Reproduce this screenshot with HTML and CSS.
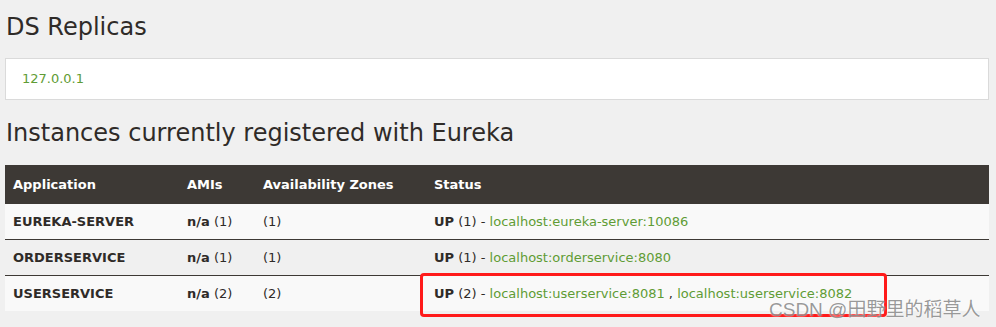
FILE: index.html
```html
<!DOCTYPE html>
<html lang="en">
<head>
  <meta charset="utf-8" />
  <title>Eureka</title>
  <link rel="stylesheet" href="styles.css">
</head>
<body>
  <h2 class="title">DS Replicas</h2>
  <ul class="replicas">
    <li><a href="#">127.0.0.1</a></li>
  </ul>

  <h2 class="title second">Instances currently registered with Eureka</h2>
  <table class="instances">
    <colgroup>
      <col class="c-app">
      <col class="c-ami">
      <col class="c-zone">
      <col>
    </colgroup>
    <thead>
      <tr>
        <th>Application</th>
        <th>AMIs</th>
        <th>Availability Zones</th>
        <th>Status</th>
      </tr>
    </thead>
    <tbody>
      <tr>
        <td><b>EUREKA-SERVER</b></td>
        <td><b>n/a</b> (1)</td>
        <td>(1)</td>
        <td><b>UP</b> (1) - <a href="#">localhost:eureka-server:10086</a></td>
      </tr>
      <tr>
        <td><b>ORDERSERVICE</b></td>
        <td><b>n/a</b> (1)</td>
        <td>(1)</td>
        <td><b>UP</b> (1) - <a href="#">localhost:orderservice:8080</a></td>
      </tr>
      <tr>
        <td><b>USERSERVICE</b></td>
        <td><b>n/a</b> (2)</td>
        <td>(2)</td>
        <td><b>UP</b> (2) - <a href="#">localhost:userservice:8081</a> , <a href="#">localhost:userservice:8082</a></td>
      </tr>
    </tbody>
  </table>

  <div class="highlight"></div>
  <div class="watermark">CSDN @田野里的稻草人</div>
</body>
</html>
```

FILE: styles.css
```css
body {
  margin: 0;
  padding: 0 7px 0 5px;
  background: #f0f0f0;
  color: #2f2b28;
  font-family: "DejaVu Sans", sans-serif;
  font-size: 13px;
  position: relative;
  height: 327px;
  overflow: hidden;
}
.title {
  margin: 0;
  padding: 12px 0 0 1px;
  font-size: 24px;
  font-weight: normal;
  line-height: 30px;
  color: #2f2b28;
}
.second {
  padding-top: 18px;
}
.replicas {
  list-style: none;
  margin: 16px 0 0;
  padding: 0 16px;
  background: #fff;
  border: 1px solid #dadada;
  height: 40px;
  line-height: 40px;
}
a {
  color: #5f9c35;
  text-decoration: none;
}
.instances {
  width: 100%;
  margin-top: 17px;
  border-collapse: collapse;
  table-layout: fixed;
}
.c-app { width: 174px; }
.c-ami { width: 76px; }
.c-zone { width: 171px; }
.instances th {
  background: #3d3935;
  color: #fff;
  text-align: left;
  font-weight: bold;
  height: 38px;
  padding: 0 8px;
}
.instances td {
  height: 35px;
  padding: 0 8px;
  border-top: 1px solid #3d3935;
  white-space: nowrap;
}
.instances tbody tr:nth-child(odd) {
  background: #f9f9f9;
}
.instances b {
  font-weight: 600;
}
.highlight {
  position: absolute;
  left: 420px;
  top: 273px;
  width: 461px;
  height: 38px;
  border: 3px solid #ff1a1a;
  border-radius: 4px;
}
.watermark {
  position: absolute;
  left: 769px;
  top: 294px;
  font-family: "Liberation Sans", "Noto Sans CJK SC", sans-serif;
  font-size: 19px;
  color: rgba(120, 120, 120, 0.75);
  text-shadow: 0 0 2px #fff;
}
```
